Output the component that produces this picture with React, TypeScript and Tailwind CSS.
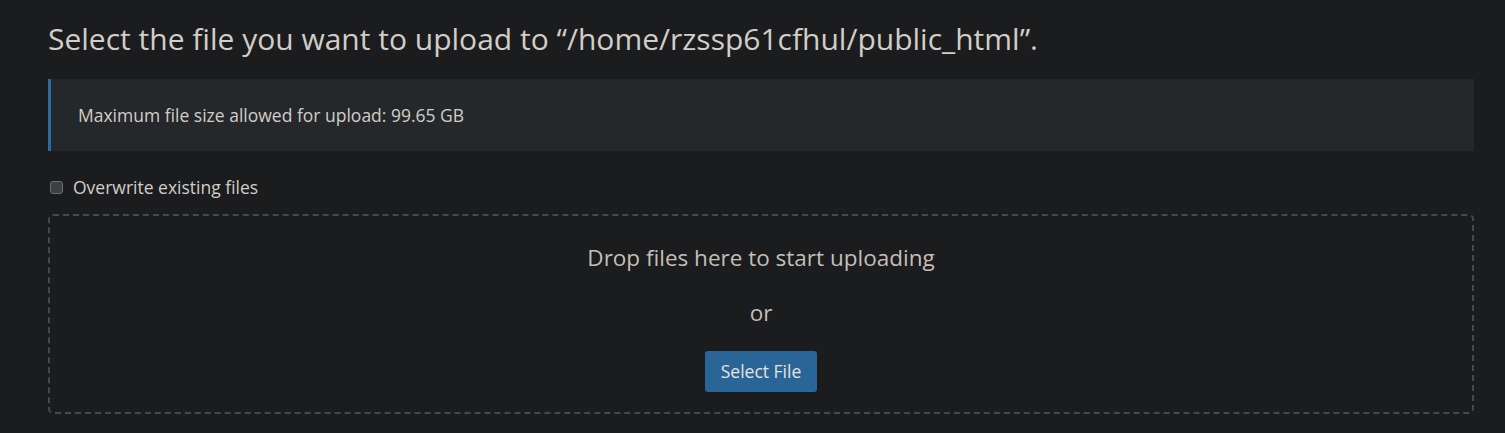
export default function App() {
  return (
    <div
      className="min-h-[433px] bg-[#1b1c1e] pl-[48px] pr-[31px] pt-[18px] text-[#d2cdc6]"
      style={{ fontFamily: '"Open Sans", "Liberation Sans", sans-serif' }}
    >
      <h1 className="text-[30px] leading-[42px] font-normal">
        Select the file you want to upload to “/home/rzssp61cfhul/public_html”.
      </h1>

      <div className="mt-[19px] flex h-[72px] items-center border-l-[3px] border-[#2f6a9c] bg-[#25282b] pl-[27px] text-[17.5px]">
        Maximum file size allowed for upload: 99.65 GB
      </div>

      <label className="mt-[24px] flex items-center gap-[10px] text-[17.5px] leading-[24px]">
        <input
          type="checkbox"
          className="ml-[2px] h-[13px] w-[13px] appearance-none rounded-[3px] border border-[#6b6e72] bg-[#3c3f43]"
        />
        Overwrite existing files
      </label>

      <div className="mt-[15px] flex h-[200px] flex-col items-center rounded-[5px] border-2 border-dashed border-[#45494c]">
        <p className="mt-[27px] text-[22.5px] leading-[30px] text-[#c4bfb7]">
          Drop files here to start uploading
        </p>
        <p className="mt-[25px] text-[22.5px] leading-[30px] text-[#c4bfb7]">or</p>
        <button className="mt-[23px] h-[41px] w-[112px] rounded-[3px] bg-[#2a6597] text-[17.5px] text-[#e6e2dc]">
          Select File
        </button>
      </div>
    </div>
  );
}
